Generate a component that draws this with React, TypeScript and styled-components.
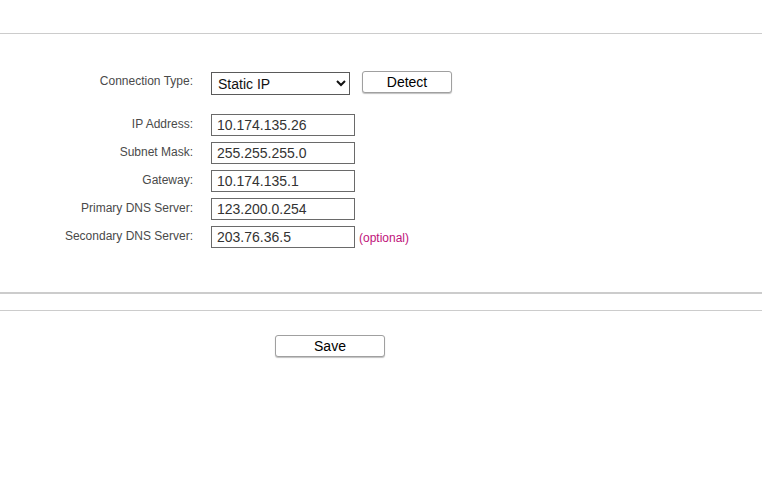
import styled, { createGlobalStyle } from "styled-components";

const GlobalStyle = createGlobalStyle`
  body {
    margin: 0;
    background: #ffffff;
    font-family: "Liberation Sans", Arial, sans-serif;
  }
`;

const fields = [
  { label: "IP Address:", value: "10.174.135.26" },
  { label: "Subnet Mask:", value: "255.255.255.0" },
  { label: "Gateway:", value: "10.174.135.1" },
  { label: "Primary DNS Server:", value: "123.200.0.254" },
  { label: "Secondary DNS Server:", value: "203.76.36.5", note: "(optional)" },
];

export default function App() {
  return (
    <Page>
      <GlobalStyle />
      <TopBar />
      <Form>
        <Row $gap={21}>
          <Label>Connection Type:</Label>
          <Select defaultValue="static">
            <option value="dynamic">Dynamic IP</option>
            <option value="static">Static IP</option>
            <option value="pppoe">PPPoE</option>
          </Select>
          <Button $width={90}>Detect</Button>
        </Row>
        {fields.map((f) => (
          <Row key={f.label} $gap={6}>
            <Label>{f.label}</Label>
            <Input defaultValue={f.value} />
            {f.note && <Note>{f.note}</Note>}
          </Row>
        ))}
      </Form>
      <Divider />
      <Footer>
        <Button $width={110}>Save</Button>
      </Footer>
    </Page>
  );
}

const Page = styled.div`
  width: 100%;
  min-height: 480px;
`;

const TopBar = styled.div`
  height: 33px;
  border-bottom: 1px solid #cccccc;
`;

const Form = styled.div`
  padding-top: 37px;
  padding-bottom: 44px;
  border-bottom: 2px solid #cccccc;
`;

const Row = styled.div<{ $gap: number }>`
  display: flex;
  align-items: flex-start;
  height: 22px;
  margin-bottom: ${(p) => p.$gap}px;
  &:last-child {
    margin-bottom: 0;
  }
`;

const Label = styled.div`
  width: 193px;
  margin-right: 18px;
  padding-top: 3px;
  text-align: right;
  font-size: 12px;
  color: #4a4a4a;
  white-space: nowrap;
`;

const Select = styled.select`
  width: 139px;
  height: 23px;
  margin-top: 1px;
  margin-right: 12px;
  box-sizing: border-box;
  border: 1px solid #5a5a5a;
  border-radius: 0;
  background: #ffffff;
  font-family: "Liberation Sans", Arial, sans-serif;
  font-size: 14px;
  color: #111111;
  padding: 0 2px;
`;

const Input = styled.input`
  width: 144px;
  height: 22px;
  box-sizing: border-box;
  border: 1px solid #6a6a6a;
  border-radius: 0;
  padding: 0 5px;
  font-family: "Liberation Sans", Arial, sans-serif;
  font-size: 14px;
  color: #333333;
  outline: none;
`;

const Note = styled.span`
  margin-left: 4px;
  padding-top: 5px;
  font-size: 12px;
  color: #c0127a;
`;

const Button = styled.button<{ $width: number }>`
  width: ${(p) => p.$width}px;
  height: 22px;
  box-sizing: border-box;
  background: #ffffff;
  border: 1px solid #a0a0a0;
  border-radius: 3px;
  box-shadow: 0 1px 1px rgba(0, 0, 0, 0.25);
  font-family: "Liberation Sans", Arial, sans-serif;
  font-size: 14px;
  color: #000000;
  padding: 0;
  cursor: pointer;
`;

const Divider = styled.div`
  height: 16px;
  border-bottom: 1px solid #cccccc;
`;

const Footer = styled.div`
  padding-top: 24px;
  padding-left: 275px;
`;
